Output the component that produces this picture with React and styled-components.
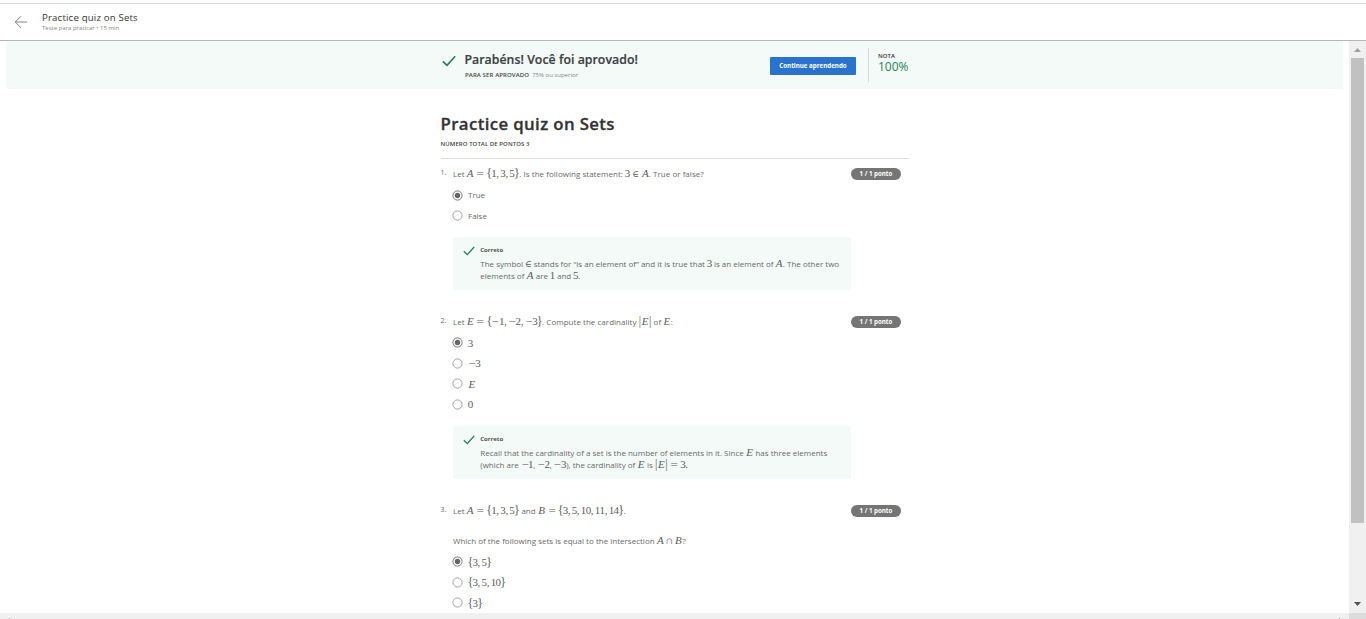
import React from "react";
import styled, { createGlobalStyle } from "styled-components";

const Global = createGlobalStyle`
  * { box-sizing: border-box; }
  body { margin: 0; background: #fff; overflow: hidden; font-family: "Open Sans", "Noto Sans", sans-serif; }
`;

const Page = styled.div`
  width: 1366px; height: 619px; display: flex; flex-direction: column;
  overflow: hidden; background: #fff; color: #6a6a6a;
`;
const Header = styled.header`
  height: 41px; flex: none; display: flex; align-items: flex-start;
  padding: 7px 0 0 14px; border-bottom: 1px solid #b6b6b6;
  background: linear-gradient(#d9d9d9, #d9d9d9) 0 3px / 100% 1px no-repeat;
  svg { margin-top: 8px; flex: none; }
`;
const HeaderText = styled.div`
  margin-left: 15px; display: flex; flex-direction: column; padding-top: 4px;
`;
const HeaderTitle = styled.div`
  font-size: 9.6px; line-height: 13px; color: #333; white-space: nowrap; letter-spacing: 0.19px;
`;
const HeaderMeta = styled.div`
  font-size: 6px; line-height: 8px; color: #888; white-space: nowrap;
`;
const Body = styled.div`flex: 1; min-height: 0; display: flex;`;
const Main = styled.main`flex: 1; min-width: 0; overflow: hidden; padding: 0 6px;`;
const Banner = styled.section`
  height: 48px; background: #f3faf8; display: flex; padding-left: 436px;
  > svg { margin-top: 14px; flex: none; }
`;
const BannerText = styled.div`width: 306px; margin-left: 8px; padding-top: 10px; flex: none;`;
const BannerTitle = styled.div`
  font-size: 12.3px; line-height: 17px; font-weight: 600; color: #3c4043; white-space: nowrap;
  padding-left: 0.5px; letter-spacing: 0.04px; -webkit-text-stroke: 0.2px #3c4043;
`;
const BannerMeta = styled.div`
  margin: 3px 0 0 1px; font-size: 6px; line-height: 8px; color: #888; white-space: nowrap;
  b { color: #444; margin-right: 3px; font-weight: 600; letter-spacing: 0.12px; }
`;
const Button = styled.button`
  width: 86px; height: 18px; margin-top: 16px; padding: 0; border: 0; border-radius: 1px; flex: none;
  background: #2a73cc; color: #fff; font: 700 6.2px/18px "Open Sans", sans-serif; white-space: nowrap;
`;
const Grade = styled.div`
  margin: 7px 0 0 12px; height: 34px; border-left: 1px solid #dadada; padding: 4px 0 0 9px;
`;
const GradeLabel = styled.div`font-size: 6px; line-height: 8px; color: #333; font-weight: 600; letter-spacing: 0.1px;`;
const GradeValue = styled.div`font-size: 12px; line-height: 14px; color: #1f8354;`;

const Quiz = styled.article`width: 469px; margin-left: 434px; padding-top: 23px;`;
const QuizTitle = styled.h1`
  margin: 0 0 1px 0.5px; font-size: 16.8px; line-height: 23px; font-weight: 600; color: #333; white-space: nowrap;
  letter-spacing: 0.38px; -webkit-text-stroke: 0.3px #333;
`;
const QuizMeta = styled.div`
  margin-left: 0.5px; padding-top: 4px; height: 23px; border-bottom: 1px solid #dedede;
  font-size: 6px; line-height: 8px; font-weight: 600; color: #444; letter-spacing: 0.07px;
`;
const Question = styled.section`
  display: grid; grid-template-columns: 13px 398px 50px; margin-top: ${(p) => p.$top}px;
`;
const Num = styled.div`font-size: 7px; line-height: 10px; height: 12px; padding-left: 0.5px;`;
const Line = styled.div`
  display: flex; align-items: baseline; height: 12px; line-height: 12px; white-space: pre;
  font-size: 8px; margin-top: ${(p) => p.$top || 0}px;
`;
const Text = styled.span`letter-spacing: ${(p) => p.$track || 0}px;`;
const Badge = styled.div`
  width: 50px; height: 12px; border-radius: 6px; background: #757575; color: #fff;
  text-align: center; font-size: 6.2px; line-height: 12px; font-weight: 700;
`;
const Options = styled.div`padding-top: 5.8px; display: flex; flex-direction: column;`;
const Option = styled.label`
  height: 20.5px; display: flex; align-items: center; font-size: 8px; line-height: 12px;
`;
const RadioIcon = styled.svg`width: 11px; height: 11px; margin: 0 5px 0 -1px; flex: none;`;
const Feedback = styled.div`
  height: 53px; margin-top: 11px; background: #f3faf8; display: flex; padding: 8px 0 0 10px;
  svg { margin-top: 1px; flex: none; }
`;
const FeedbackText = styled.div`margin-left: 5.3px;`;
const FeedbackTitle = styled.div`font-size: 6px; line-height: 10px; font-weight: 700; color: #555; margin-bottom: 2px;`;

const Formula = styled.span`
  display: inline-flex; align-items: baseline; font-size: 9.65px; color: #5c5c5c;
`;
const Glyph = styled.span`
  display: inline-flex; justify-content: center; flex: none;
  width: ${(p) => p.$w}em; margin-left: ${(p) => p.$l || 0}em; margin-right: ${(p) => p.$r || 0}em;
  font-style: ${(p) => (p.$it ? "italic" : "normal")};
  font-family: "Liberation Serif", "DejaVu Serif", serif;
`;
const Ink = styled.span`
  font-size: ${(p) => p.$size || 1.14}em; line-height: 12px; display: block;
  ${(p) => p.$stretch && `transform: scaleX(${p.$stretch});`}
`;

const METRICS = {
  A: { $w: 0.75, $it: true },
  B: { $w: 0.79, $it: true },
  E: { $w: 0.78, $it: true },
  "=": { $w: 0.778, $l: 0.278, $r: 0.278, stretch: 1.2 },
  "∈": { $w: 0.667, $l: 0.278, $r: 0.278, size: 0.95 },
  "∊": { $w: 0.667, size: 0.95 },
  "∩": { $w: 0.667, $l: 0.222, $r: 0.222 },
  "−": { $w: 0.778, stretch: 1.15 },
  "|": { $w: 0.278, size: 1.2 },
  "{": { $w: 0.5, size: 1.25 },
  "}": { $w: 0.5, size: 1.25 },
  ",": { $w: 0.278, $r: 0.167 },
  ".": { $w: 0.278 },
};

function M({ children }) {
  return (
    <Formula>
      {[...children].map((c, i) => {
        const { size, stretch, ...box } = METRICS[c] || { $w: 0.5 };
        return (
          <Glyph key={i} {...box}>
            <Ink $size={size} $stretch={stretch}>{c === "∊" ? "∈" : c}</Ink>
          </Glyph>
        );
      })}
    </Formula>
  );
}

const Check = ({ w, h }) => (
  <svg width={w} height={h} viewBox="0 0 14 12" fill="none" stroke="#1f8354" strokeWidth="1.6">
    <path d="M0.8 6.4 5 10.4 13.2 1.2" />
  </svg>
);

function Choice({ on, children }) {
  return (
    <Option>
      <RadioIcon viewBox="0 0 11 11">
        <circle cx="5.5" cy="5.5" r="4.6" fill="none" stroke={on ? "#6a6a6a" : "#9a9a9a"} strokeWidth="0.9" />
        {on && <circle cx="5.5" cy="5.5" r="2.7" fill="#666" />}
      </RadioIcon>
      {children}
    </Option>
  );
}

function Correct({ children }) {
  return (
    <Feedback>
      <Check w={12} h={10} />
      <FeedbackText>
        <FeedbackTitle>Correto</FeedbackTitle>
        {children}
      </FeedbackText>
    </Feedback>
  );
}

const Scroll = styled.aside`
  width: 17px; flex: none; background: #f0f0f0; display: flex; flex-direction: column; align-items: center;
`;
const ScrollArrow = styled.div`
  height: 17px; flex: none; display: flex; align-items: center; justify-content: center;
  padding-bottom: ${(p) => p.$lift || 0}px;
`;
const Thumb = styled.div`width: 13px; height: 465px; background: #c1c1c1;`;
const ScrollFill = styled.div`flex: 1;`;
const Bottom = styled.footer`
  height: 6px; flex: none; background: #f0f0f0; display: flex; justify-content: space-between; align-items: flex-end; padding-left: 9px;
`;
const Tick = styled.span`width: 1px; height: 1px; background: #999;`;
const Corner = styled.span`width: 17px; height: 6px; background: #dcdcdc; margin-left: 9px;`;
const BottomEnd = styled.div`display: flex; align-items: flex-end;`;

export default function App() {
  return (
    <Page>
      <Global />
      <Header>
        <svg width="13" height="14" viewBox="0 0 13 14" fill="none" stroke="#777" strokeWidth="0.9">
          <path d="M7 1.2 1.2 7 7 12.8M1.2 7H13" />
        </svg>
        <HeaderText>
          <HeaderTitle>Practice quiz on Sets</HeaderTitle>
          <HeaderMeta>Teste para praticar • 15 min</HeaderMeta>
        </HeaderText>
      </Header>
      <Body>
        <Main>
          <Banner>
            <Check w={14} h={12} />
            <BannerText>
              <BannerTitle>Parabéns! Você foi aprovado!</BannerTitle>
              <BannerMeta><b>PARA SER APROVADO</b>75% ou superior</BannerMeta>
            </BannerText>
            <Button>Continue aprendendo</Button>
            <Grade>
              <GradeLabel>NOTA</GradeLabel>
              <GradeValue>100%</GradeValue>
            </Grade>
          </Banner>
          <Quiz>
            <QuizTitle>Practice quiz on Sets</QuizTitle>
            <QuizMeta>NÚMERO TOTAL DE PONTOS 3</QuizMeta>

            <Question $top={9}>
              <Num>1.</Num>
              <div>
                <Line $top={-1}>
                  <Text>Let </Text><M>{"A={1,3,5}"}</M><Text $track={0.03}>. Is the following statement: </Text><M>3∈A</M><Text $track={0.03}>. True or false?</Text>
                </Line>
                <Options>
                  <Choice on>True</Choice>
                  <Choice>False</Choice>
                </Options>
                <Correct>
                  <Line>
                    <Text>The symbol </Text><M>∊</M><Text $track={0.01}> stands for “is an element of” and it is true that </Text><M>3</M><Text> is an element of </Text><M>A</M><Text>. The other two</Text>
                  </Line>
                  <Line>
                    <Text>elements of </Text><M>A</M><Text> are </Text><M>1</M><Text> and </Text><M>5</M><Text>.</Text>
                  </Line>
                </Correct>
              </div>
              <Badge>1 / 1 ponto</Badge>
            </Question>

            <Question $top={26}>
              <Num>2.</Num>
              <div>
                <Line $top={-1}>
                  <Text>Let </Text><M>{"E={−1,−2,−3}"}</M><Text $track={0.03}>. Compute the cardinality </Text><M>|E|</M><Text> of </Text><M>E</M><Text>:</Text>
                </Line>
                <Options>
                  <Choice on><M>3</M></Choice>
                  <Choice><M>−3</M></Choice>
                  <Choice><M>E</M></Choice>
                  <Choice><M>0</M></Choice>
                </Options>
                <Correct>
                  <Line>
                    <Text>Recall that the cardinality of a set is the number of elements in it. Since </Text><M>E</M><Text> has three elements</Text>
                  </Line>
                  <Line>
                    <Text>(which are </Text><M>−1</M><Text>, </Text><M>−2</M><Text>, </Text><M>−3</M><Text>), the cardinality of </Text><M>E</M><Text> is </Text><M>|E|=3.</M>
                  </Line>
                </Correct>
              </div>
              <Badge>1 / 1 ponto</Badge>
            </Question>

            <Question $top={26}>
              <Num>3.</Num>
              <div>
                <Line $top={-1}>
                  <Text>Let </Text><M>{"A={1,3,5}"}</M><Text> and </Text><M>{"B={3,5,10,11,14}"}</M><Text>.</Text>
                </Line>
                <Line $top={18}>
                  <Text $track={0.01}>Which of the following sets is equal to the intersection </Text><M>A∩B</M><Text>?</Text>
                </Line>
                <Options>
                  <Choice on><M>{"{3,5}"}</M></Choice>
                  <Choice><M>{"{3,5,10}"}</M></Choice>
                  <Choice><M>{"{3}"}</M></Choice>
                </Options>
              </div>
              <Badge>1 / 1 ponto</Badge>
            </Question>
          </Quiz>
        </Main>
        <Scroll>
          <ScrollArrow><svg width="7" height="4" viewBox="0 0 7 4"><path d="M0 4 3.5 0 7 4z" fill="#a0a0a0" /></svg></ScrollArrow>
          <Thumb />
          <ScrollFill />
          <ScrollArrow $lift={2}><svg width="7" height="4" viewBox="0 0 7 4"><path d="M0 0 3.5 4 7 0z" fill="#505050" /></svg></ScrollArrow>
        </Scroll>
      </Body>
      <Bottom>
        <Tick />
        <BottomEnd><Tick /><Corner /></BottomEnd>
      </Bottom>
    </Page>
  );
}
